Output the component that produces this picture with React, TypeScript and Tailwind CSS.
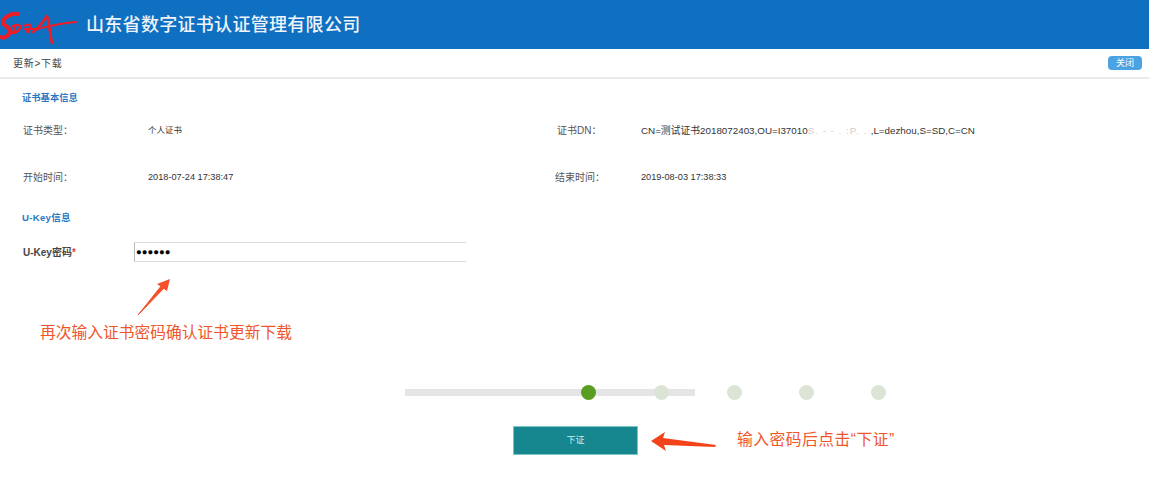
const cjk = "font-['Liberation_Sans','Noto_Sans_CJK_SC',sans-serif]";

function Logo() {
  return (
    <svg width="78" height="48" viewBox="0 0 78 48" className="shrink-0" fill="none">
      <g stroke="#ee1c25" strokeLinecap="round" strokeLinejoin="round">
        <path d="M18 13C11 12 4 16 3 21C2 25 10 25 10 30C9 35 4 38 1 36" strokeWidth="4" />
        <path d="M13 25C18 23 21 24 20 27C19 30 15 32 13 32L15 25" strokeWidth="2.4" />
        <path d="M24 25C28 23 32 23 30 27C28 30 25 31 29 31M25 28H35" strokeWidth="2.2" />
        <path d="M33 31C38 28 42 22 47 15C49 22 50 33 52 42" strokeWidth="2.6" />
        <path d="M38 28C46 26 60 22 76 21" strokeWidth="1.8" />
      </g>
    </svg>
  );
}

function Info({ label, value, labelClass = "" }: { label: string; value: React.ReactNode; labelClass?: string }) {
  return (
    <div className="flex items-center h-[14px]">
      <div className={`text-[10px] text-[#555] ${labelClass}`}>{label}</div>
      <div className="text-[9.2px] text-[#333] whitespace-nowrap pt-[2px]">{value}</div>
    </div>
  );
}

function Dot({ active = false }: { active?: boolean }) {
  return <div className={`w-[15px] h-[15px] rounded-full ${active ? "bg-[#5a9e20]" : "bg-[#dbe4d5]"}`} />;
}

export default function App() {
  return (
    <div className={`relative w-[1149px] h-[496px] bg-white overflow-hidden ${cjk}`}>
      <header className="h-[49px] bg-[#0f6fc1] flex items-center">
        <Logo />
        <h1 className="ml-[8px] mt-[2px] text-[18px] font-medium text-[#eef4fa] tracking-[0.3px] whitespace-nowrap">山东省数字证书认证管理有限公司</h1>
      </header>

      <div className="h-[30px] border-b-2 border-[#ebebeb] flex items-center justify-between pl-[13px] pr-[7px]">
        <span className="text-[10px] text-[#444] tracking-[0.7px]">更新&gt;下载</span>
        <button className="w-[34px] h-[14px] rounded-[4px] bg-[#4ba3e3] text-[9px] leading-[14px] text-white">关闭</button>
      </div>

      <section className="pl-[22px] pt-[13px]">
        <h2 className="text-[9.3px] leading-[12px] font-bold text-[#2a78c2]">证书基本信息</h2>

        <div className="mt-[19px] grid grid-cols-[534px_1fr] gap-y-[33px] pl-[1px]">
          <Info label="证书类型：" labelClass="w-[125px]" value={<span className="text-[8.5px]">个人证书</span>} />
          <Info
            label="证书DN："
            labelClass="w-[84px]"
            value={
              <span className="flex items-center text-[9.8px]">
                CN=测试证书2018072403,OU=I37010
                <span className="w-[63px] tracking-[1px] text-[#cfcfcf]">S. - - . :P. .</span>
                ,L=dezhou,S=SD,C=CN
              </span>
            }
          />
          <Info label="开始时间：" labelClass="w-[125px]" value="2018-07-24 17:38:47" />
          <Info label="结束时间：" labelClass="w-[86px] -ml-[2px]" value="2019-08-03 17:38:33" />
        </div>

        <h2 className="mt-[28px] text-[9.6px] leading-[12px] font-bold text-[#2a78c2] tracking-[0.3px]">U-Key信息</h2>

        <div className="mt-[18px] flex items-center pl-[1px]">
          <label className="w-[111px] text-[10px] font-bold text-[#444]">
            U-Key密码<span className="text-[#e8413c]">*</span>
          </label>
          <div className="w-[332px] h-[20px] border border-r-0 border-[#dcdcdc] border-l-[#bbb] flex items-center pl-[1px] text-[9.5px] text-black">
            ●●●●●●
          </div>
        </div>
      </section>

      <div className="absolute left-[40px] top-[323px] text-[15.75px] leading-[20px] text-[#f0562c] whitespace-nowrap">
        再次输入证书密码确认证书更新下载
      </div>

      <svg className="absolute left-[132px] top-[272px]" width="44" height="46" viewBox="0 0 44 46" fill="none">
        <path d="M6 43L30 13L33 15Z" fill="#f5502a" stroke="#f5502a" strokeWidth="1" strokeLinejoin="round" />
        <path d="M38 7L25 12L35 19Z" fill="#f5502a" />
      </svg>

      <div className="absolute left-[405px] top-[385px] w-[490px] h-[15px] flex items-center">
        <div className="relative w-[290px] h-[7px] bg-[#e5e5e5] shrink-0">
          <div className="absolute left-[176px] -top-1"><Dot active /></div>
          <div className="absolute left-[249px] -top-1"><Dot /></div>
        </div>
        <div className="ml-[32px]"><Dot /></div>
        <div className="ml-[57px]"><Dot /></div>
        <div className="ml-[57px]"><Dot /></div>
      </div>

      <button className="absolute left-[513px] top-[426px] w-[125px] h-[29px] bg-[#16868f] border border-[#7fc4c9] text-[9px] text-[#cfeaec]">
        下证
      </button>

      <svg className="absolute left-[648px] top-[428px]" width="72" height="26" viewBox="0 0 72 26" fill="none">
        <path d="M3 13L17 4L15 10L68 17L67 19L16 17L18 23Z" fill="#f4431a" />
      </svg>

      <div className="absolute left-[737px] top-[430px] text-[15.75px] leading-[20px] tracking-[0.5px] text-[#f0562c] whitespace-nowrap">
        输入密码后点击“下证”
      </div>
    </div>
  );
}
